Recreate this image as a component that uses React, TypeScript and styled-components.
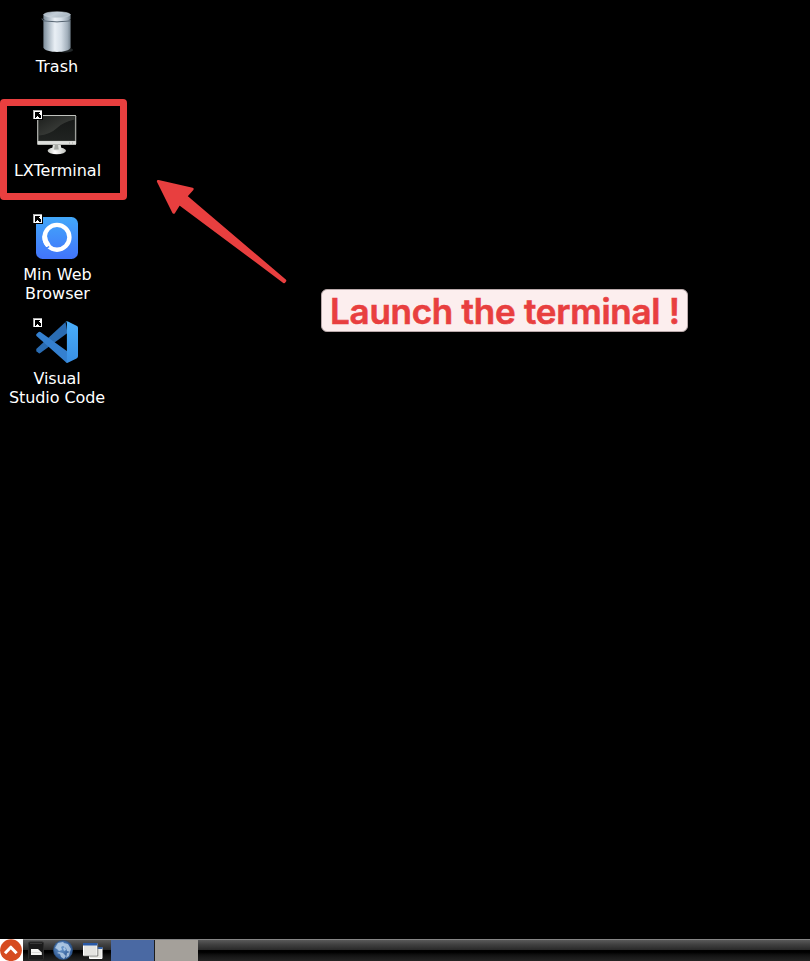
import React from 'react';
import styled, { createGlobalStyle } from 'styled-components';

const GlobalStyle = createGlobalStyle`
  * { box-sizing: border-box; }
  body { margin: 0; background: #000; }
`;

const Screen = styled.main`
  position: relative;
  display: flex;
  flex-direction: column;
  width: 810px;
  height: 961px;
  overflow: hidden;
  background: #000;
`;

const Desktop = styled.section`
  flex: 1;
  display: grid;
  grid-template-columns: 114px;
  grid-auto-rows: 104px;
  padding-top: 8px;
`;

const Launcher = styled.div`
  display: flex;
  flex-direction: column;
  align-items: center;
`;

const IconFrame = styled.div`
  position: relative;
  width: 48px;
  height: 48px;
  margin-bottom: 1px;
  svg { display: block; }
`;

const ShortcutBadge = styled.svg`
  position: absolute;
  left: -1px;
  top: -3px;
`;

const Label = styled.span<{ $tracking?: number; $nudge?: number }>`
  padding-left: ${({ $nudge }) => $nudge ?? 1}px;
  color: #fff;
  font: 16px/19px 'DejaVu Sans', sans-serif;
  letter-spacing: ${({ $tracking }) => $tracking ?? 0}px;
  text-align: center;
  white-space: pre-line;
`;

const Highlight = styled.div`
  position: absolute;
  left: 0;
  top: 99px;
  width: 127px;
  height: 101px;
  border: 7px solid #e83f3f;
  border-radius: 4px;
`;

const Pointer = styled.svg`
  position: absolute;
  left: 150px;
  top: 170px;
`;

const Callout = styled.div`
  position: absolute;
  left: 321px;
  top: 289px;
  width: 367px;
  height: 43px;
  padding-left: 8px;
  border: 1px solid #b9a9aa;
  border-radius: 6px;
  background: #fceeee;
  color: #e83f3f;
  font: 600 35px/42px Inter, sans-serif;
  letter-spacing: -0.25px;
  -webkit-text-stroke: 0.6px #e83f3f;
  white-space: nowrap;
`;

const Taskbar = styled.footer`
  display: flex;
  height: 22px;
  border-top: 1px solid #858585;
  background: linear-gradient(#595959 0, #424242 20%, #292929 47%, #000 50%, #000 58%, #111 72%, #242424 100%);
`;

const StartButton = styled.div`
  width: 23px;
  height: 22px;
  margin-top: -1px;
  background: #fff;
`;

const QuickLaunch = styled.div`
  display: flex;
  width: 88px;
  padding-left: 4px;
  gap: 6px;
  svg { display: block; flex: none; }
`;

const WorkspaceCell = styled.div<{ $active?: boolean }>`
  width: ${({ $active }) => ($active ? 44 : 43)}px;
  height: 21px;
  background: ${({ $active }) => ($active ? '#4a69a3' : '#a4a09a')};
  border-right: ${({ $active }) => ($active ? '1px solid #1d1d1d' : '0')};
`;

const TrashIcon = () => (
  <svg width="48" height="48" viewBox="0 0 48 48">
    <defs>
      <linearGradient id="can">
        <stop offset="0" stopColor="#7d8c99" />
        <stop offset=".15" stopColor="#a3b1bd" />
        <stop offset=".42" stopColor="#e9eff5" />
        <stop offset=".65" stopColor="#d5dee7" />
        <stop offset=".88" stopColor="#a3b0bc" />
        <stop offset="1" stopColor="#75838f" />
      </linearGradient>
      <linearGradient id="lid" x2="1" y2=".4">
        <stop stopColor="#9cabb7" />
        <stop offset=".5" stopColor="#c3ced8" />
        <stop offset="1" stopColor="#aab7c2" />
      </linearGradient>
    </defs>
    <ellipse cx="32" cy="42" rx="8" ry="2.5" fill="#222729" />
    <path d="M10.4 12v27.5C12 45.4 36 45.4 37.6 39.5V12z" fill="url(#can)" />
    <path d="M9 10.5q0 1.7 2 2.4 13 2 26 0" fill="none" stroke="#566471" strokeWidth="1" />
    <path d="M10.4 6v5.4C13 13 35 13 37.6 11.4V6z" fill="url(#can)" />
    <ellipse cx="24" cy="6.6" rx="13.2" ry="2.9" fill="url(#lid)" stroke="#c8d2da" strokeWidth=".5" />
  </svg>
);

const MonitorIcon = () => (
  <svg width="48" height="48" viewBox="0 5.5 48 48">
    <defs>
      <linearGradient id="panel" y2="1" x2="0">
        <stop stopColor="#161817" />
        <stop offset="1" stopColor="#202321" />
      </linearGradient>
      <linearGradient id="glare" x2="1" y2="1">
        <stop stopColor="#1d1f1d" />
        <stop offset="1" stopColor="#484b47" />
      </linearGradient>
      <linearGradient id="base">
        <stop stopColor="#bfc2bc" />
        <stop offset=".4" stopColor="#fff" />
        <stop offset="1" stopColor="#bfc1bc" />
      </linearGradient>
    </defs>
    <ellipse cx="23.8" cy="44.2" rx="9.2" ry="3.5" fill="url(#base)" />
    <path d="M20 37h7.5l1 6q-4.5 2-9.3 0z" fill="#dfe1dd" />
    <path d="M22 38h3l.7 5H21z" fill="#a5a8a3" />
    <rect x="4.2" y="8.5" width="39" height="30" rx="1.3" fill="#dddeda" />
    <path d="M5.2 9.5H42.2V34.5H5.2z" fill="url(#panel)" stroke="#6c706b" strokeWidth=".5" />
    <path d="M6 10h35.5v3Q30 15.5 24 21.5 17 28 6 29z" fill="url(#glare)" />
    <path d="M5 34.8h37.5v3H5z" fill="#dedfdc" />
    <path d="M5 38h37.5" stroke="#a9aca7" strokeWidth=".8" />
    <path d="M36 36.5h1m2 0h1" stroke="#a0a39e" />
  </svg>
);

const MinIcon = () => (
  <svg width="48" height="48" viewBox="0 0 48 48">
    <defs>
      <linearGradient id="min" x2="0" y2="1">
        <stop stopColor="#42a8fa" />
        <stop offset="1" stopColor="#4274fb" />
      </linearGradient>
    </defs>
    <rect x="3" y="1" width="42" height="42" rx="6.5" fill="url(#min)" />
    <circle cx="24" cy="21.3" r="12.4" fill="none" stroke="#fff" strokeWidth="4.4" />
    <path d="M11.8 21q.1 4.5 3.2 8" fill="none" stroke="#fff" strokeWidth="5" strokeLinecap="round" />
    <path d="m12.8 31.8 1.8-.4 1.6-.8" fill="none" stroke="#4384fa" strokeWidth="1.2" />
  </svg>
);

const CodeIcon = () => (
  <svg width="48" height="48" viewBox="0 0 48 48">
    <defs>
      <linearGradient id="code" x2="0" y2="1">
        <stop stopColor="#49aefa" />
        <stop offset="1" stopColor="#398fe4" />
      </linearGradient>
    </defs>
    <path d="m3.5 28.7 29-26.7L34.5 13 7.3 33.1q-1 .6-1.8-.1l-2-1.8q-.8-1.2 0-2.5z" fill="#2a6cb2" />
    <path d="m3.5 14 2.2-2q.8-.7 1.7 0L34.5 31.6V43q-.9-.1-1.8-.9L3.5 16q-.8-1 0-2z" fill="#3480d0" />
    <path d="M32.3 42.3c1 .8 2 .6 3 .1l8.2-4Q45 37.7 45 36.3V7.8Q45 6.4 43.5 5.7L35 1.6q-1.5-.7-2.7.5 1.6-1 1.6 1.2v37.6q0 2.6-1.6 1.4z" fill="url(#code)" />
  </svg>
);

const Badge = () => (
  <ShortcutBadge width="12" height="12" viewBox="-1 -1 12 12" shapeRendering="crispEdges">
    <path d="M0 0h10v10H0z" fill="#000" />
    <path d="M0 0h9v9H0z" fill="#aaa" />
    <path d="M1 1h8v8H1z" fill="#fff" />
    <path d="M2 2h5v1H6v1h1v1h1v3H6V7H5V6H4v1H3v1H2z" fill="#000" />
  </ShortcutBadge>
);

const StartIcon = () => (
  <svg width="23" height="22" viewBox="0 0 23 22">
    <circle cx="11" cy="11.2" r="10.9" fill="#d64b20" />
    <path d="m5 14.3 5.8-6.1 5.8 6.1" fill="none" stroke="#fff" strokeWidth="3" strokeLinejoin="round" />
  </svg>
);

const FileManagerIcon = () => (
  <svg width="20" height="21" viewBox="0 0 20 21">
    <rect x="1.5" y="2" width="15" height="18" rx="1.5" fill="#1a1a1a" stroke="#2c2c2c" />
    <path d="M3 3.5h12" stroke="#373737" />
    <path d="M4 9h7l3.8 3.5V15H4z" fill="#f5f5f3" />
    <path d="M4.5 12.5h9" stroke="#c5c5c2" strokeWidth=".6" />
  </svg>
);

const GlobeIcon = () => (
  <svg width="20" height="21" viewBox="0 0 20 21">
    <defs>
      <radialGradient id="sea" cx=".4" cy=".4">
        <stop stopColor="#6f9dd0" />
        <stop offset="1" stopColor="#315b96" />
      </radialGradient>
    </defs>
    <circle cx="10" cy="10" r="9.6" fill="url(#sea)" stroke="#2e527d" strokeWidth=".6" />
    <path d="M2 8 5 3l5-1 2 2-2 2-2 1 1 3-3 1-2-2zm9-5 4 1 3 5-1 3-3-1-1-3-3-2zm-5 9 4 1 3 3-2 3-3-2-1-3-3-1zm8 1 3-1-1 4-3 2z" fill="#c4daee" opacity=".75" />
    <path d="m10 8 2-1 1 3-2 1z" fill="#a6c5e5" />
  </svg>
);

const WindowsIcon = () => (
  <svg width="24" height="21" viewBox="0 1 24 21">
    <path d="M10.5 8.5h12.5v11H10.5z" fill="#e8e8e4" stroke="#fff" />
    <path d="M10 8h13.5v2H10z" fill="#315fa5" />
    <path d="M4.5 4.5h13.5v12H4.5z" fill="#e4e4e1" stroke="#fff" />
    <path d="M4 4h14.5v2.5H4z" fill="#2859a7" />
    <path d="M4.5 17H18.8v-11" fill="none" stroke="#666763" strokeWidth=".8" />
  </svg>
);

const launchers = [
  { label: 'Trash', Icon: TrashIcon, nudge: 0 },
  { label: 'LXTerminal', Icon: MonitorIcon, shortcut: true },
  { label: 'Min Web\nBrowser', Icon: MinIcon, shortcut: true },
  { label: 'Visual\nStudio Code', Icon: CodeIcon, shortcut: true, tracking: -0.1, nudge: 0 },
];

export default function App() {
  return (
    <>
      <GlobalStyle />
      <Screen>
        <Desktop>
          {launchers.map(({ label, Icon, shortcut, tracking, nudge }) => (
            <Launcher key={label}>
              <IconFrame>
                <Icon />
                {shortcut && <Badge />}
              </IconFrame>
              <Label $tracking={tracking} $nudge={nudge}>{label}</Label>
            </Launcher>
          ))}
        </Desktop>
        <Highlight />
        <Pointer width="150" height="120" viewBox="0 0 150 120">
          <path
            d="M8.3 11.3 42.3 19 35.8 26.2 134.9 110.6 134.1 111.8 29.3 33.6 23.7 42.4z"
            fill="#e83f3f"
            stroke="#e83f3f"
            strokeWidth="2.8"
            strokeLinejoin="round"
          />
        </Pointer>
        <Callout>Launch the terminal !</Callout>
        <Taskbar>
          <StartButton><StartIcon /></StartButton>
          <QuickLaunch>
            <FileManagerIcon />
            <GlobeIcon />
            <WindowsIcon />
          </QuickLaunch>
          <WorkspaceCell $active />
          <WorkspaceCell />
        </Taskbar>
      </Screen>
    </>
  );
}
